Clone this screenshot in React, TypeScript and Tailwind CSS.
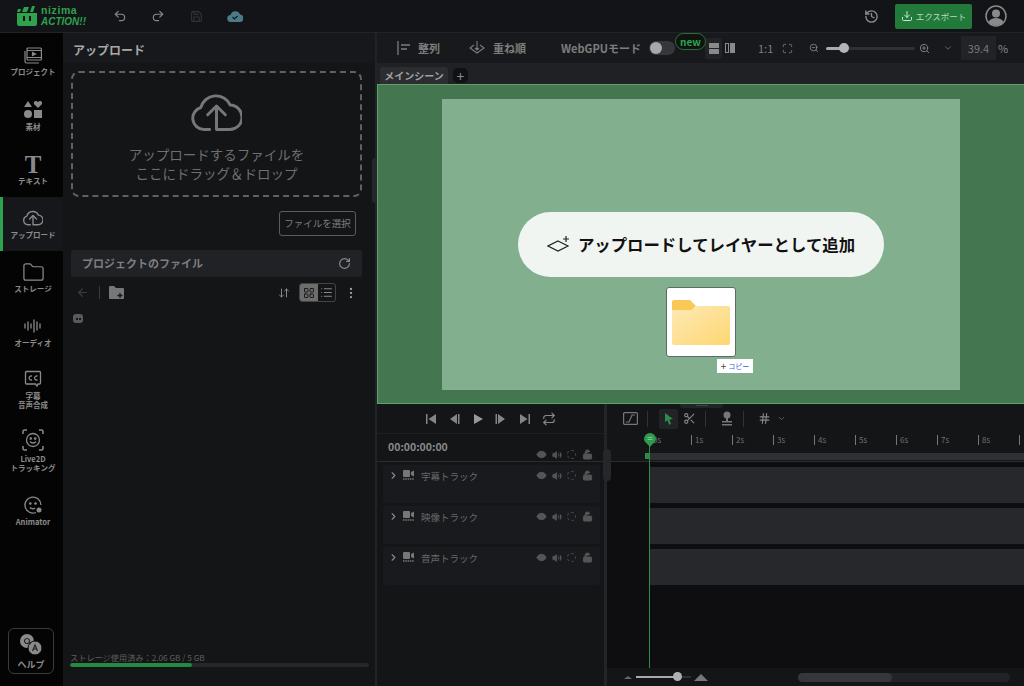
import React from "react";
import {
  Undo2, Redo2, Save, History, Download, RotateCw, ArrowLeft, Folder,
  ArrowDownUp, LayoutGrid, List, EllipsisVertical, Scissors, ChevronRight, ChevronDown,
  Eye, Volume2, LockOpen, Repeat, ZoomIn, ZoomOut, Hash, Maximize,
} from "lucide-react";

const FONT = { fontFamily: '"Noto Sans CJK JP", "Noto Sans", sans-serif' };
const gray = "#8a8a8a";

function Logo() {
  return (
    <div className="flex items-center gap-[4px] ml-[17px] w-[70px]">
      <svg width="20" height="20" viewBox="0 0 20 20">
        <path d="M0 7h20v11a2 2 0 0 1-2 2H2a2 2 0 0 1-2-2z" fill="#2ea24d" />
        <path d="M0 6 L1 3 L4 3 L3 6z M5 6 L7 1 L12 1 L10 6z M13 6 L15 0 L18 0 L16 6z" fill="#2ea24d" />
        <rect x="6" y="10" width="2" height="5" fill="#131417" />
        <rect x="12" y="10" width="2" height="5" fill="#131417" />
      </svg>
      <div className="flex flex-col font-bold text-[#2ea24d] whitespace-nowrap" style={{ fontFamily: '"Liberation Sans", sans-serif' }}>
        <span className="text-[10.500px] leading-[11.500px] tracking-[0.6px]">nizima</span>
        <span className="text-[10px] leading-[11.500px] italic">ACTION!!</span>
      </div>
    </div>
  );
}

function CloudUp({ size, color, sw = 3 }: { size: number; color: string; sw?: number }) {
  return (
    <svg width={size} height={size * 0.78} viewBox="0 0 52 40" fill="none" stroke={color} strokeWidth={sw} strokeLinecap="round" strokeLinejoin="round">
      <path d="M19 38H13A11.500 11.500 0 0 1 10 15.500A16 16 0 0 1 40 13A12.500 12.500 0 0 1 39 38H26V15" />
      <path d="M17 23L26 14L35 23" />
    </svg>
  );
}

function Nav({ label, icon, active, h = 54, extra }: { label: React.ReactNode; icon: React.ReactNode; active?: boolean; h?: number; extra?: boolean }) {
  return (
    <div
      className={`flex flex-col items-center justify-center text-center font-bold text-[7.500px] leading-[9px] text-[#8c8c8c] border-l-[3px] pb-[2px] ${active ? "bg-[#16171a] border-[#2ea24d]" : "border-transparent"}`}
      style={{ height: h }}
    >
      <div className="h-[22px] flex items-center justify-center">{icon}</div>
      <div className={extra ? "mt-[3px]" : "mt-[1px]"}>{label}</div>
    </div>
  );
}

function FilmIcon() {
  return (
    <svg width="18" height="17" viewBox="0 0 18 17" fill="none" stroke={gray} strokeWidth="1.200">
      <rect x="3" y="1" width="14.400" height="12" rx="1" />
      <path d="M3 3.500h14.400M3 10.500h14.400M1 4v10.500a1.500 1.500 0 0 0 1.500 1.500H15" />
      <path d="M8.500 5.500l3 1.500-3 1.500z" fill={gray} />
    </svg>
  );
}
function ShapesIcon() {
  return (
    <svg width="20" height="20" viewBox="0 0 20 20" fill={gray}>
      <path d="M5 1l4 6H1z" />
      <path d="M15 8l-3.600-3.600C10 3 11.500 .5 13.400 1c.8.2 1.600 1.200 1.600 1.200S15.800 1.200 16.600 1c1.900-.5 3.400 2 2 3.400z" />
      <circle cx="5" cy="14" r="4" />
      <rect x="11" y="10" width="8" height="8" />
    </svg>
  );
}
function WaveIcon() {
  return (
    <svg width="20" height="16" viewBox="0 0 20 16" fill="none" stroke={gray} strokeWidth="1.300" strokeLinecap="round">
      <path d="M2 6v4M5 4v8M8 6v4M11 2v12M14 4v8M17 6v4" />
    </svg>
  );
}
function CcIcon() {
  return (
    <svg width="18" height="18" viewBox="0 0 18 18" fill="none" stroke={gray} strokeWidth="1.300">
      <path d="M2.500 1.500h13a1 1 0 0 1 1 1v10.500a1 1 0 0 1-1 1H14l-1 2-1.500-2H2.500a1 1 0 0 1-1-1V2.500a1 1 0 0 1 1-1z" />
      <path d="M8 6.200a2 2 0 1 0 0 3.600M13.500 6.200a2 2 0 1 0 0 3.600" />
    </svg>
  );
}
function FaceTrackIcon() {
  return (
    <svg width="22" height="22" viewBox="0 0 22 22" fill="none" stroke={gray} strokeWidth="1.300">
      <path d="M1 5V2.500A1.500 1.500 0 0 1 2.500 1H5M17 1h2.500A1.500 1.500 0 0 1 21 2.500V5M1 17v2.500A1.500 1.500 0 0 0 2.500 21H5M17 21h2.500a1.500 1.500 0 0 0 1.500-1.500V17" strokeWidth="1.500" />
      <circle cx="11" cy="11" r="6.500" />
      <circle cx="8.800" cy="9.500" r=".7" fill={gray} />
      <circle cx="13.200" cy="9.500" r=".7" fill={gray} />
      <path d="M8 12.500c1.500 2 4.500 2 6 0" />
    </svg>
  );
}
function AnimatorIcon() {
  return (
    <svg width="18" height="18" viewBox="0 0 18 18" fill="none" stroke={gray} strokeWidth="1.300">
      <path d="M12 16.500A8 8 0 1 1 17 9" />
      <circle cx="6.300" cy="7.500" r=".7" fill={gray} />
      <circle cx="11.500" cy="7.500" r=".7" fill={gray} />
      <path d="M6 11.500c1.500 1.500 3.500 1.500 5 .5" />
      <circle cx="15" cy="14" r="2.500" fill={gray} stroke="none" />
    </svg>
  );
}

function Sidebar() {
  return (
    <div className="w-[63px] shrink-0 bg-[#040404] flex flex-col">
      <Nav h={56} label="プロジェクト" icon={<FilmIcon />} />
      <Nav label="素材" icon={<ShapesIcon />} />
      <Nav label="テキスト" icon={<span className="text-[#8a8a8a] text-[25px] font-bold leading-none" style={{ fontFamily: '"Liberation Serif", serif' }}>T</span>} />
      <Nav active label="アップロード" icon={<CloudUp size={20} color={gray} sw={3.500} />} />
      <Nav label="ストレージ" icon={<Folder size={23} color={gray} strokeWidth={1.300} />} />
      <Nav label="オーディオ" icon={<WaveIcon />} />
      <Nav h={60} label={<>字幕<br />音声合成</>} icon={<CcIcon />} />
      <Nav h={64} extra label={<>Live2D<br />トラッキング</>} icon={<FaceTrackIcon />} />
      <Nav h={56} label="Animator" icon={<AnimatorIcon />} />
      <div className="mt-auto mb-[12px] ml-[8px] w-[46px] h-[46px] rounded-[6px] border border-[#3a3a3a] flex flex-col items-center justify-center text-[#8c8c8c] font-bold text-[9px] leading-[10px]">
        <svg width="26" height="26" viewBox="0 0 26 26">
          <circle cx="9" cy="8" r="7" fill="#8a8a8a" />
          <circle cx="17" cy="15" r="7" fill="#8a8a8a" stroke="#040404" strokeWidth="1" />
          <path d="M9 8a2.500 2.500 0 1 0 .01 0M11 12l1.500 1.500" fill="none" stroke="#222" strokeWidth="1.200" transform="translate(0 -2.500)" />
          <path d="M14.500 18l2.500-6 2.500 6M15.500 16h3" fill="none" stroke="#222" strokeWidth="1.200" />
        </svg>
        <span className="mt-[1px]">ヘルプ</span>
      </div>
    </div>
  );
}

function UploadPanel() {
  return (
    <div className="w-[312px] shrink-0 bg-[#141517] flex flex-col">
      <div className="h-[30px] bg-[#17181b] flex items-center pt-[3px] pl-[10px] text-[12px] font-bold text-[#a8a8a8]">アップロード</div>
      <div className="mx-[8px] mt-[8px] h-[126px] w-[291px] rounded-[8px] border-2 border-dashed border-[#616161] flex flex-col items-center">
        <div className="mt-[19px]"><CloudUp size={51} color="#777" sw={3} /></div>
        <div className="mt-[13px] text-center text-[13.500px] leading-[19px] text-[#6f6f6f]">
          アップロードするファイルを<br />ここにドラッグ＆ドロップ
        </div>
      </div>
      <div className="mt-[14px] mr-[19px] self-end w-[77px] h-[25px] border border-[#5c5c5c] rounded-[3px] flex items-center justify-center text-[9.500px] text-[#7e7e7e]">ファイルを選択</div>
      <div className="mt-[14px] mx-[8px] w-[291px] h-[27px] bg-[#212226] rounded-[2px] flex items-center justify-between pl-[11px] pr-[11px]">
        <span className="text-[11px] font-bold text-[#7e7e7e]">プロジェクトのファイル</span>
        <RotateCw size={13} color="#8a8a8a" strokeWidth={2.200} />
      </div>
      <div className="mt-[6px] h-[19px] flex items-center pl-[13px]">
        <ArrowLeft size={13} color="#3f3f3f" />
        <div className="w-px h-[13px] bg-[#3a3a3a] ml-[10px]" />
        <svg width="15" height="13" viewBox="0 0 15 13" className="ml-[9px]">
          <path d="M0 1a1 1 0 0 1 1-1h4l2 2h7a1 1 0 0 1 1 1v9a1 1 0 0 1-1 1H1a1 1 0 0 1-1-1z" fill="#777" />
          <path d="M11 7v5M8.500 9.500h5" stroke="#141517" strokeWidth="1.300" />
        </svg>
        <ArrowDownUp size={12} color="#888" className="ml-[154px]" />
        <div className="ml-[9px] w-[37px] h-[19px] border border-[#444] rounded-[3px] flex overflow-hidden">
          <div className="w-[18px] bg-[#6d6d6d] flex items-center justify-center"><LayoutGrid size={12} color="#1c1c1c" /></div>
          <div className="flex-1 flex items-center justify-center"><List size={13} color="#888" /></div>
        </div>
        <EllipsisVertical size={14} color="#999" className="ml-[8px]" />
      </div>
      <div className="ml-[10px] mt-[12px] w-[10px] h-[9px] rounded-[3px] bg-[#5a5a5a] flex items-center justify-center gap-[1px]">
        <div className="w-[2px] h-[2px] bg-[#1a1a1a]" /><div className="w-[2px] h-[2px] bg-[#1a1a1a]" />
      </div>
      <div className="mt-auto mb-[19px] ml-[7px]">
        <div className="text-[8.200px] leading-[10px] text-[#5e5e5e]">ストレージ使用済み：2.06 GB / 5 GB</div>
        <div className="mt-[1px] w-[299px] h-[4px] rounded-full bg-[#26272b] overflow-hidden">
          <div className="w-[122px] h-full bg-[#238a44] rounded-full" />
        </div>
      </div>
    </div>
  );
}

function TopToolbar() {
  return (
    <div className="h-[30px] bg-[#18191c] flex items-center text-[#7d7d7d] text-[11px] font-bold whitespace-nowrap relative">
      <svg width="16" height="14" viewBox="0 0 16 14" className="ml-[20px]" fill="none" stroke="#7d7d7d" strokeWidth="1.300"><path d="M1 0v14M4 4h9M4 8h6" /></svg>
      <span className="ml-[5px] w-[40px]">整列</span>
      <svg width="16" height="14" viewBox="0 0 16 14" className="ml-[11px]" fill="none" stroke="#7d7d7d" strokeWidth="1.100"><path d="M5 4L1 7l7 5 7-5-4-3M8 0v9M6 7l2 2 2-2" /></svg>
      <span className="ml-[8px] w-[55px]">重ね順</span>
      <span className="ml-[13px] w-[79px] text-[11px]">WebGPUモード</span>
      <div className="ml-[9px] w-[26px] h-[14px] rounded-full bg-[#36373b] flex items-center pl-[1px]">
        <div className="w-[12px] h-[12px] rounded-full bg-[#a8a8a8]" />
      </div>
      <div className="absolute left-[298px] top-0 w-[31px] h-[17px] rounded-full border border-[#2f6b3e] bg-[#0f1411] flex items-center justify-center text-[10px] text-[#2ea24d] leading-none">new</div>
      <div className="ml-[30px] w-[17px] h-[21px] rounded-[3px] bg-[#222327] flex flex-col items-center justify-center gap-[1px]">
        <div className="w-[10px] h-[5px] bg-[#8a8a8a]" /><div className="w-[10px] h-[5px] bg-[#8a8a8a]" />
      </div>
      <div className="ml-[3px] w-[10px] h-[10px] flex gap-[1px]">
        <div className="w-[4px] h-full border border-[#8a8a8a]" /><div className="w-[5px] h-full bg-[#8a8a8a]" />
      </div>
      <span className="ml-[23px] w-[15px] font-normal">1:1</span>
      <Maximize size={11} color="#777" className="ml-[9px]" />
      <ZoomOut size={10} color="#888" className="ml-[16px]" />
      <div className="ml-[7px] w-[89px] h-[3px] bg-[#2f3034] rounded-full relative">
        <div className="w-[18px] h-full bg-[#aaa] rounded-full" />
        <div className="absolute left-[13px] top-[-4px] w-[10px] h-[10px] rounded-full bg-[#b4b4b4]" />
      </div>
      <ZoomIn size={11} color="#888" className="ml-[4px]" />
      <ChevronDown size={10} color="#777" className="ml-[13px]" />
      <div className="ml-[8px] w-[35px] h-[24px] bg-[#222327] flex items-center justify-center text-[11px] font-normal text-[#7a7a7a]">39.4</div>
      <span className="ml-[2px] font-normal text-[#888]">%</span>
    </div>
  );
}

function Canvas() {
  return (
    <div className="h-[320px] bg-[#44774f] border-t border-b border-l border-[#5aa56d] flex shrink-0 relative">
      <div className="mt-[14px] ml-[64px] w-[518px] h-[291px] bg-[#82b08e] flex flex-col items-center">
        <div className="mt-[113px] w-[366px] h-[65px] rounded-full bg-[#f1f5f1] flex items-center justify-center gap-[7px] text-[#111] text-[16.400px] font-bold">
          <svg width="24" height="20" viewBox="0 0 24 20" fill="none" stroke="#222" strokeWidth="1.200"><path d="M11 6l10 5-10 5-10-5z" /><path d="M19 1v6M16 4h6" /></svg>
          アップロードしてレイヤーとして追加
        </div>
        <div className="mt-[10px] w-[70px] h-[70px] bg-white rounded-[3px] border border-[#5d6b60] flex items-center justify-center">
          <svg width="58" height="46" viewBox="0 0 58 46">
            <defs>
              <linearGradient id="f" x1="0" y1="0" x2="1" y2="1"><stop offset="0" stopColor="#fde9b6" /><stop offset="1" stopColor="#fed772" /></linearGradient>
            </defs>
            <path d="M0 3a2 2 0 0 1 2-2h16l6 6-4 4H0z" fill="#fac856" />
            <path d="M0 11h20l5-4h31a2 2 0 0 1 2 2v35a2 2 0 0 1-2 2H2a2 2 0 0 1-2-2z" fill="url(#f)" />
          </svg>
        </div>
        <div className="self-start ml-[275px] mt-[2px] w-[36px] h-[14px] bg-white flex items-center justify-center gap-[2px] text-[7px] text-[#3b5bdb] leading-none">
          <span className="text-[#444] text-[10px]">+</span>コピー
        </div>
      </div>
      <div className="absolute left-[302px] bottom-[-5px] w-[43px] h-[4px] rounded-b-[3px] bg-[#232428] flex justify-center z-10">
        <div className="w-[12px] h-px mt-[1px] bg-[#444]" />
      </div>
    </div>
  );
}

function TrackIcons() {
  const c = "#555";
  return (
    <div className="flex items-center gap-[5px]">
      <Eye size={11} color={c} fill={c} stroke="#555" />
      <Volume2 size={10} color={c} fill={c} />
      <div className="w-[9px] h-[9px] rounded-full border border-dashed border-[#4a4a4a]" />
      <LockOpen size={11} color={c} fill={c} className="ml-[1px]" />
    </div>
  );
}

function Track({ name }: { name: string }) {
  return (
    <div className="h-[38px] bg-[#191a1d] rounded-[3px] flex items-start pt-[5px] pl-[5px] pr-[7px] text-[9.500px] leading-[12px] text-[#686868] mb-[3px]">
      <ChevronRight size={11} color="#888" strokeWidth={2.500} />
      <svg width="11" height="11" viewBox="0 0 11 11" className="ml-[4px]" fill="#777">
        <rect x="0" y="0" width="7" height="7" rx="1" /><path d="M8 2l3-1.500v6L8 5z" />
        <path d="M0 9h11" stroke="#777" strokeWidth="1.500" strokeDasharray="1.500 .8" />
      </svg>
      <span className="ml-[7px]">{name}</span>
      <div className="ml-auto"><TrackIcons /></div>
    </div>
  );
}

function Transport({ kind }: { kind: "start" | "prev" | "play" | "next" | "end" }) {
  const d = {
    start: "M1 1h1.500v10H1zM11 1v10L3.500 6z",
    prev: "M9 1v10L2 6zM10 1h1.500v10H10z",
    play: "M2 1l9 5-9 5z",
    next: "M3 1v10l7-5zM.5 1H2v10H.5z",
    end: "M1 1v10l7.500-5zM9.500 1H11v10H9.500z",
  }[kind];
  return <svg width="12" height="12" viewBox="0 0 12 12"><path d={d} fill={kind === "play" ? "#999" : "#858585"} /></svg>;
}

function TrackPanel() {
  return (
    <div className="w-[227px] shrink-0 flex flex-col">
      <div className="h-[30px] flex items-center justify-center gap-[11.500px] border-b border-[#1e1f22]">
        <Transport kind="start" />
        <Transport kind="prev" />
        <Transport kind="play" />
        <Transport kind="next" />
        <Transport kind="end" />
        <Repeat size={14} color="#888" />
      </div>
      <div className="h-[28px] flex items-center pl-[11px] pr-[11px] border-b border-[#2b2c2f] text-[10.500px] font-bold text-[#8a8a8a] leading-none">
        <span className="pb-[1px]">00:00:00:00</span>
        <div className="ml-auto mt-[14px]"><TrackIcons /></div>
      </div>
      <div className="pt-[3px] pl-[6px] pr-[4px]">
        <Track name="字幕トラック" />
        <Track name="映像トラック" />
        <Track name="音声トラック" />
      </div>
    </div>
  );
}

function Timeline() {
  const secs = ["1s", "2s", "3s", "4s", "5s", "6s", "7s", "8s", ""];
  return (
    <div className="flex-1 min-w-0 flex flex-col relative overflow-hidden">
      <div className="h-[30px] flex items-center pl-[16px] text-[#888]">
        <svg width="15" height="13" viewBox="0 0 15 13" fill="none" stroke="#777" strokeWidth="1.200"><rect x=".6" y=".6" width="13.800" height="11.800" rx="1" /><path d="M3 10h3l3-7h3" /></svg>
        <div className="ml-[9px] w-px h-[16px] bg-[#333]" />
        <div className="ml-[11px] w-[19px] h-[20px] rounded-[2px] bg-[#222327] flex items-center justify-center">
          <svg width="10" height="12" viewBox="0 0 10 12"><path d="M1 0l8 6-3.500.5L7 11l-2 .7-1.500-4.500L1 9z" fill="#2e8b49" /></svg>
        </div>
        <Scissors size={13} color="#888" className="ml-[5px]" />
        <div className="ml-[9px] w-px h-[16px] bg-[#333]" />
        <svg width="12" height="15" viewBox="0 0 12 15" className="ml-[15px]" fill="#777"><circle cx="6" cy="4" r="3.500" /><rect x="5" y="7" width="2" height="3" /><rect x="1" y="10" width="10" height="1.500" /><rect x="1" y="13" width="10" height="1.500" /></svg>
        <div className="ml-[10px] w-px h-[16px] bg-[#333]" />
        <Hash size={13} color="#888" className="ml-[14px]" />
        <ChevronDown size={9} color="#777" className="ml-[6px]" />
      </div>
      <div className="h-[19px] pl-[43px] flex items-start text-[8px] leading-[10px] text-[#6f6f6f] whitespace-nowrap">
        <div className="w-[41px] shrink-0 pl-[3px] pt-[1px]">0s</div>
        {secs.map((s, i) => (
          <div key={i} className="w-[41px] shrink-0 flex pt-[1px] h-[11px]">
            <div className="w-px h-[10px] bg-[#777]" />
            <span className="ml-[3px]">{s}</span>
          </div>
        ))}
      </div>
      <div className="h-[7px] ml-[38px] flex">
        <div className="w-[5px] h-[6px] bg-[#2e8b49]" />
        <div className="flex-1 bg-[#2f3034]" />
      </div>
      <div className="h-px mt-[1px] bg-[#2b2c2f]" />
      <div className="h-[207px] bg-[#0e0e10] pt-[5px] flex flex-col gap-[5px] pl-[43px]">
        <div className="h-[36px] bg-[#27282b]" />
        <div className="h-[36px] bg-[#27282b]" />
        <div className="h-[36px] bg-[#27282b]" />
      </div>
      <div className="h-[18px] flex items-center bg-[#141517]">
        <div className="ml-[17px] w-0 h-0 border-x-[4px] border-x-transparent border-b-[3px] border-b-[#666]" />
        <div className="ml-[4px] w-[55px] h-[2px] bg-[#2f3034] relative">
          <div className="w-[41px] h-full bg-[#aaa]" />
          <div className="absolute left-[37px] top-[-4px] w-[9px] h-[9px] rounded-full bg-[#b0b0b0]" />
        </div>
        <div className="ml-[3px] w-0 h-0 border-x-[7px] border-x-transparent border-b-[7px] border-b-[#777]" />
        <div className="ml-[90px] w-[212px] h-[9px] rounded-full bg-[#222327]">
          <div className="w-[94px] h-full rounded-full bg-[#36373b]" />
        </div>
      </div>
      <div className="absolute left-[42px] top-[36px] w-px h-[228px] bg-[#2e8b49]" />
      <svg width="12" height="14" viewBox="0 0 12 14" className="absolute left-[37px] top-[29px]">
        <path d="M6 14C3 10 0 9 0 6a6 6 0 0 1 12 0c0 3-3 4-6 8z" fill="#2e9a4c" />
        <path d="M3.500 4.500h5M3.500 6.500h5" stroke="#8fd1a3" strokeWidth=".8" />
      </svg>
    </div>
  );
}

export default function App() {
  return (
    <div className="w-[1024px] h-[686px] flex flex-col bg-[#141517] overflow-hidden" style={FONT}>
      <div className="h-[33px] shrink-0 bg-[#131417] border-b border-[#222327] flex items-center">
        <Logo />
        <Undo2 size={14} color="#888" className="ml-[26px]" />
        <Redo2 size={14} color="#888" className="ml-[24px]" />
        <Save size={13} color="#333" className="ml-[25px]" />
        <svg width="16" height="12" viewBox="0 0 16 12" className="ml-[24px]"><path d="M4 12a3.500 3.500 0 0 1-.5-7A5 5 0 0 1 13 4.500 3.500 3.500 0 0 1 12.500 12z" fill="#4c7a85" /><path d="M5.500 7l2 2 3-3" stroke="#16181a" strokeWidth="1.200" fill="none" /></svg>
        <History size={15} color="#8c8c8c" strokeWidth={2.200} className="ml-auto" />
        <div className="ml-[16px] w-[77px] h-[25px] rounded-[2px] bg-[#217a3a] flex items-center justify-center gap-[3px] text-[8.500px] text-[#b9d8c1]">
          <Download size={12} color="#cfe5d5" />エクスポート
        </div>
        <svg width="22" height="22" viewBox="0 0 22 22" className="ml-[13px] mr-[17px]" fill="#8a8a8a">
          <circle cx="11" cy="8.500" r="4" />
          <path d="M3.500 17c1.500-3 4.500-4 7.500-4s6 1 7.500 4a10 10 0 0 1-15 0z" />
          <circle cx="11" cy="11" r="10" fill="none" stroke="#8a8a8a" strokeWidth="1.500" />
        </svg>
      </div>
      <div className="flex-1 min-h-0 flex relative">
        <Sidebar />
        <UploadPanel />
        <div className="w-[2px] bg-[#222327] shrink-0" />
        <div className="absolute left-[372px] top-[125px] w-[6px] h-[45px] rounded-[3px] bg-[#26272b]" />
        <div className="flex-1 min-w-0 flex flex-col">
          <TopToolbar />
          <div className="h-[21px] shrink-0 bg-[#202125] flex items-end pl-[3px]">
            <div className="w-[68px] h-[17px] rounded-t-[3px] bg-[#2c2d31] flex items-center justify-center text-[10px] font-bold text-[#a0a0a0]">メインシーン</div>
            <div className="ml-[5px] mb-[1px] w-[15px] h-[15px] rounded-[5px] bg-[#101113] flex items-center justify-center text-[14px] leading-none text-[#8a8a8a]">+</div>
          </div>
          <Canvas />
          <div className="flex-1 min-h-0 flex relative">
            <TrackPanel />
            <div className="w-[3px] bg-[#232428] shrink-0" />
            <div className="absolute left-[226px] top-[45px] w-[8px] h-[32px] rounded-[4px] bg-[#26272b] z-10" />
            <Timeline />
          </div>
        </div>
      </div>
    </div>
  );
}
